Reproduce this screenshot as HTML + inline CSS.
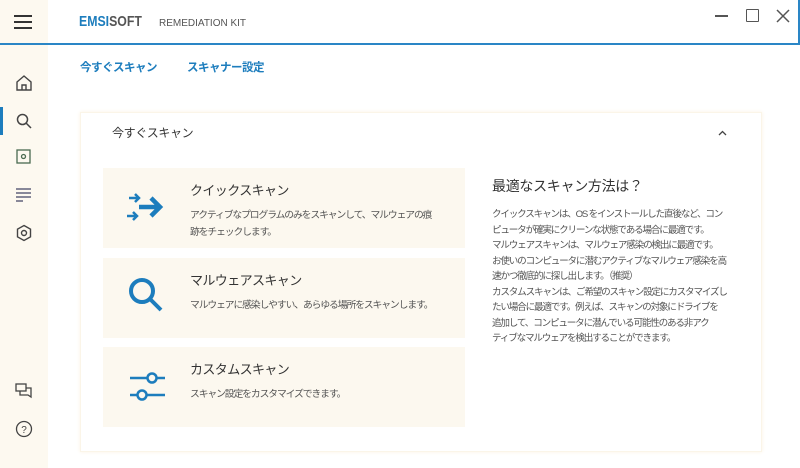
<!DOCTYPE html>
<html><head><meta charset="utf-8"><style>
*{margin:0;padding:0;box-sizing:border-box}
body{width:800px;height:468px;background:#fff;font-family:"Liberation Sans","Noto Sans CJK JP",sans-serif;position:relative;overflow:hidden;color:#333}
.side{position:absolute;left:0;top:0;width:48px;height:468px;background:#fdf9f0}
.hdrline{position:absolute;left:0;top:43px;width:800px;height:2px;background:#2a86c6}
.rborder{position:absolute;right:0;top:0;width:2px;height:45px;background:#2a86c6}
.abs{position:absolute;white-space:nowrap}
.tab{position:absolute;top:59px;font-size:11.5px;letter-spacing:-0.5px;color:#1d7dbd;font-weight:bold}
.card{position:absolute;left:103px;width:362px;height:80px;background:#fcf8ef}
.card h3{position:absolute;left:87px;top:12px;font-size:13px;letter-spacing:-0.6px;font-weight:normal;color:#333;white-space:nowrap}
.card p{position:absolute;left:87px;top:39px;font-size:9.8px;letter-spacing:-1.1px;line-height:17px;color:#555;white-space:nowrap}
.card svg{position:absolute}
.info{position:absolute;left:492px;top:207px;font-size:9.6px;letter-spacing:-1.2px;line-height:15.5px;color:#555;white-space:nowrap}
</style></head><body>
<div class="side"></div>
<div class="hdrline"></div>
<div class="rborder"></div>
<div class="abs" style="left:14px;top:15px;width:18px;height:2px;background:#333"></div>
<div class="abs" style="left:14px;top:21px;width:18px;height:2px;background:#333"></div>
<div class="abs" style="left:14px;top:27px;width:18px;height:2px;background:#333"></div>
<div class="abs" style="left:79px;top:13px;font-size:15px;font-weight:bold;color:#1d7dbd;transform:scaleX(0.82);transform-origin:left">EMSI<span style="color:#555">SOFT</span></div>
<div class="abs" style="left:159px;top:18px;font-size:10px;color:#555">REMEDIATION KIT</div>
<div class="abs" style="left:715px;top:15px;width:13px;height:1.5px;background:#555"></div>
<div class="abs" style="left:746px;top:9px;width:13px;height:13px;border:1.5px solid #555;border-radius:1px"></div>
<svg class="abs" style="left:776px;top:9px" width="14" height="14"><path d="M1 1L13 13M13 1L1 13" stroke="#555" stroke-width="1.5"/></svg>
<svg class="abs" style="left:15px;top:74px" width="18" height="18" fill="none" stroke="#444" stroke-width="1.4"><path d="M2 8L9 2L16 8V16H2Z"/><path d="M7 16V11H11V16"/></svg>
<div class="abs" style="left:0;top:107px;width:3px;height:28px;background:#1d7dbd"></div>
<svg class="abs" style="left:15px;top:112px" width="18" height="18" fill="none" stroke="#444" stroke-width="1.5"><circle cx="7.5" cy="7.5" r="5"/><path d="M11 11L16 16"/></svg>
<svg class="abs" style="left:16px;top:149px" width="16" height="16" fill="none" stroke="#4a6a50" stroke-width="1.3"><rect x="1" y="1" width="13" height="13"/><circle cx="7.5" cy="7.5" r="2"/></svg>
<svg class="abs" style="left:16px;top:188px" width="16" height="14"><rect x="0" y="0" width="15" height="2" fill="#889"/><rect x="0" y="4" width="15" height="2" fill="#889"/><rect x="0" y="8" width="15" height="2" fill="#889"/><rect x="0" y="12" width="7" height="2" fill="#889"/></svg>
<svg class="abs" style="left:15px;top:224px" width="18" height="18" fill="none" stroke="#444" stroke-width="1.4"><path d="M9 1.5L15.5 5.2V12.8L9 16.5L2.5 12.8V5.2Z"/><circle cx="9" cy="9" r="2.5"/></svg>
<svg class="abs" style="left:15px;top:382px" width="18" height="18" fill="none" stroke="#444" stroke-width="1.3"><rect x="1" y="2" width="10" height="7"/><path d="M5 9V13H13L16 15V6H11"/></svg>
<svg class="abs" style="left:15px;top:420px" width="18" height="18" fill="none" stroke="#444" stroke-width="1.3"><circle cx="9" cy="9" r="7.5"/><text x="9" y="13" font-size="10" text-anchor="middle" fill="#444" stroke="none" font-family="Liberation Sans">?</text></svg>
<div class="tab" style="left:80px">今すぐスキャン</div>
<div class="tab" style="left:187px">スキャナー設定</div>
<div class="abs" style="left:80px;top:112px;width:682px;height:340px;border:1px solid #fbf5e8;box-shadow:0 0 4px #fbf3e4"></div>
<div class="abs" style="left:112px;top:124px;font-size:12px;letter-spacing:-0.4px;color:#333">今すぐスキャン</div>
<svg class="abs" style="left:718px;top:130px" width="9" height="6"><path d="M1 5L4.5 1.5L8 5" stroke="#444" stroke-width="1.3" fill="none"/></svg>
<div class="card" style="top:168px">
<svg style="left:22px;top:20px" width="44" height="44" fill="none" stroke="#1d7dbd" stroke-width="2.5"><path d="M4 10H14M10 6L14 10L10 14"/><path d="M2 28H12M8 24L12 28L8 32"/><path d="M14 19H34M26 10L35 19L26 28" stroke-width="4.5"/></svg>
<h3>クイックスキャン</h3>
<p>アクティブなプログラムのみをスキャンして、マルウェアの痕<br>跡をチェックします。</p></div>
<div class="card" style="top:258px">
<svg style="left:24px;top:18px" width="44" height="44" fill="none" stroke="#1d7dbd" stroke-width="4"><circle cx="15" cy="15" r="11"/><path d="M23 23L34 34"/></svg>
<h3>マルウェアスキャン</h3>
<p>マルウェアに感染しやすい、あらゆる場所をスキャンします。</p></div>
<div class="card" style="top:347px">
<svg style="left:26px;top:22px" width="40" height="36" fill="none" stroke="#1d7dbd" stroke-width="2.5"><path d="M1 9H18M28 9H36M1 26H8M18 26H36"/><circle cx="23" cy="9" r="4.5"/><circle cx="13" cy="26" r="4.5"/></svg>
<h3>カスタムスキャン</h3>
<p>スキャン設定をカスタマイズできます。</p></div>
<div class="abs" style="left:492px;top:176px;font-size:14px;letter-spacing:-0.3px;color:#333">最適なスキャン方法は？</div>
<div class="info">クイックスキャンは、OS をインストールした直後など、コン<br>ピュータが確実にクリーンな状態である場合に最適です。<br>マルウェアスキャンは、マルウェア感染の検出に最適です。<br>お使いのコンピュータに潜むアクティブなマルウェア感染を高<br>速かつ徹底的に探し出します。（推奨）<br>カスタムスキャンは、ご希望のスキャン設定にカスタマイズし<br>たい場合に最適です。例えば、スキャンの対象にドライブを<br>追加して、コンピュータに潜んでいる可能性のある非アク<br>ティブなマルウェアを検出することができます。</div>
</body></html>
